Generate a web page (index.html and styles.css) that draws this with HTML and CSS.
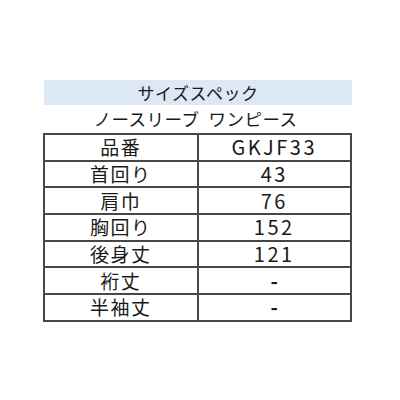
FILE: index.html
```html
<!DOCTYPE html>
<html lang="ja">
<head>
<meta charset="utf-8">
<link rel="stylesheet" href="styles.css">
</head>
<body>
<div class="sheet">
  <div class="title">サイズスペック</div>
  <div class="subtitle">ノースリーブ&nbsp;&nbsp;ワンピース</div>
  <table class="spec">
    <tr><td>品番</td><td class="val">GKJF33</td></tr>
    <tr><td>首回り</td><td class="val">43</td></tr>
    <tr><td>肩巾</td><td class="val">76</td></tr>
    <tr><td>胸回り</td><td class="val">152</td></tr>
    <tr><td>後身丈</td><td class="val">121</td></tr>
    <tr><td>裄丈</td><td class="val dash">-</td></tr>
    <tr><td>半袖丈</td><td class="val dash">-</td></tr>
  </table>
</div>
</body>
</html>
```
FILE: styles.css
```css
html, body {
  margin: 0;
  padding: 0;
  background: #ffffff;
}
body {
  width: 400px;
  height: 400px;
  font-family: "Noto Sans CJK JP", "Noto Sans", sans-serif;
  color: #1a1a1a;
}
.sheet {
  padding: 80px 0 0 43px;
  width: 309px;
}
.title {
  margin-left: 1px;
  height: 25px;
  line-height: 25px;
  background: #dce8f4;
  text-align: center;
  font-size: 17px;
  letter-spacing: 0.5px;
}
.subtitle {
  height: 28px;
  line-height: 28px;
  text-align: center;
  font-size: 17.5px;
  letter-spacing: 0.5px;
  padding-right: 4px;
}
.spec {
  border-collapse: collapse;
  width: 309px;
  table-layout: fixed;
}
.spec td {
  border: 2px solid #474747;
  height: 24.7px;
  padding: 0;
  text-align: center;
  font-size: 19px;
  line-height: 22px;
  letter-spacing: 1.5px;
}
.spec td.val {
  letter-spacing: 2.5px;
  font-size: 20px;
}
.spec td.dash {
  font-weight: 700;
  letter-spacing: 0;
}
```
